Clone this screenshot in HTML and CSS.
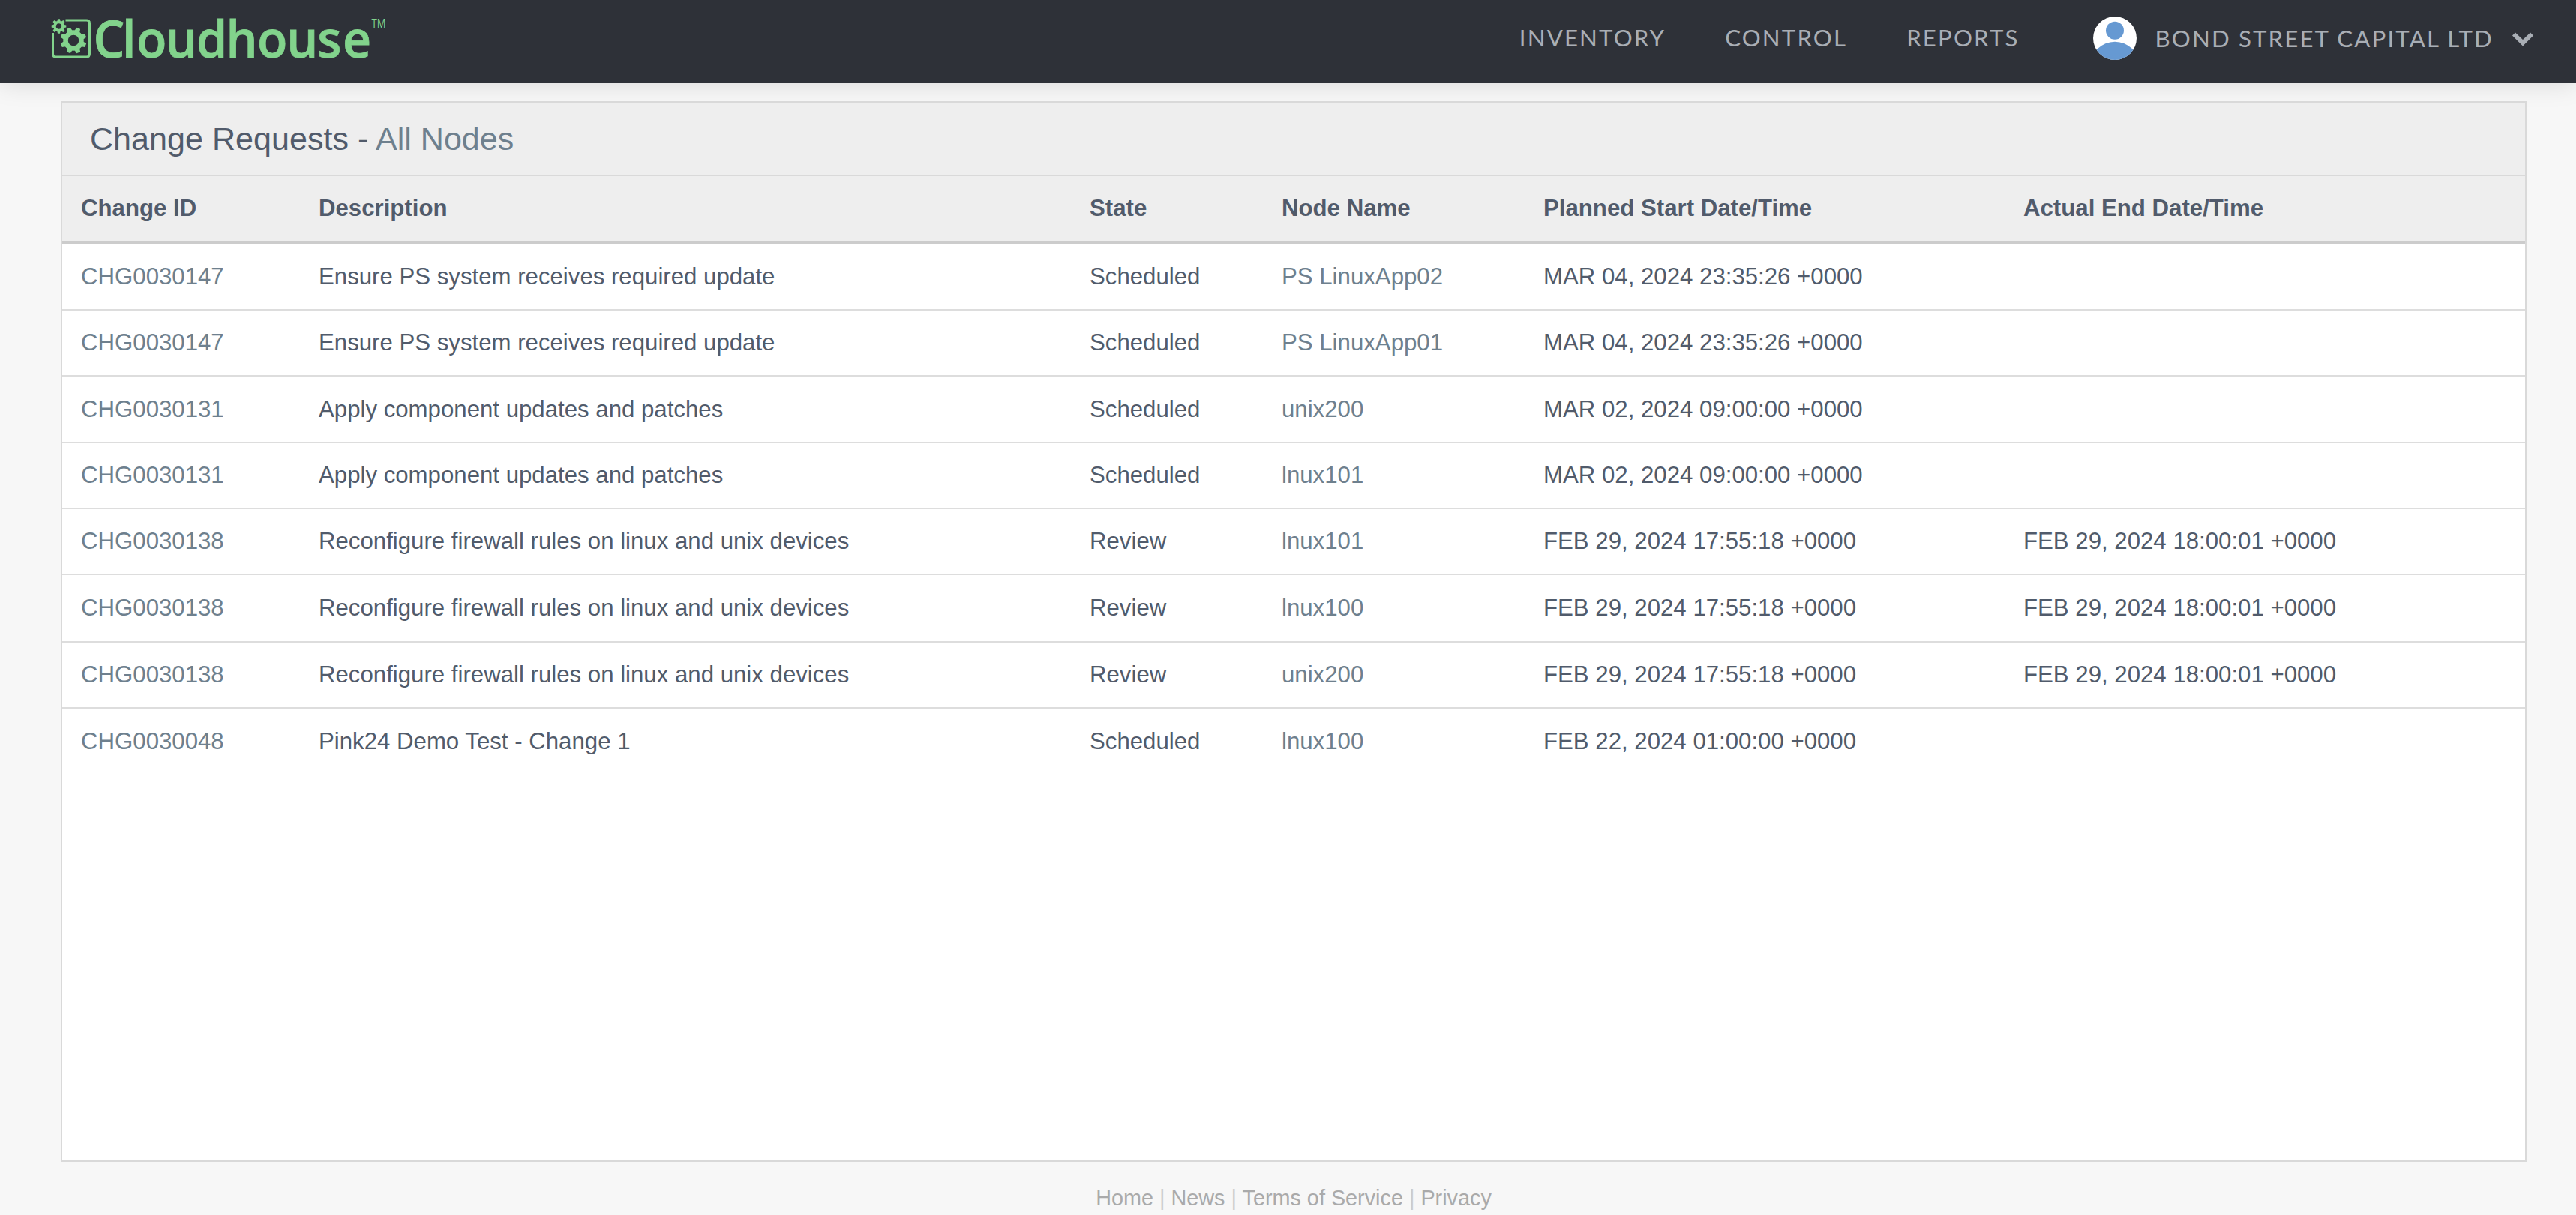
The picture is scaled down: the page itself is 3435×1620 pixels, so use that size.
FILE: index.html
```html
<!DOCTYPE html>
<html lang="en">
<head>
    <meta charset="UTF-8">
    <meta name="viewport" content="width=device-width, initial-scale=1.0">
    <title>Change Requests - Cloudhouse</title>
    <link rel="stylesheet" href="styles.css">
</head>
<body>

<header class="navbar">
    <a class="logo" href="#">
        <svg width="460" height="111" viewBox="68 0 460 111">
            <defs>
                <path id="tooth" d="M-4 -11 L-2.6 -17.5 L2.6 -17.5 L4 -11 Z"/>
                <g id="teeth">
                    <use href="#tooth" transform="rotate(22.5)"/>
                    <use href="#tooth" transform="rotate(67.5)"/>
                    <use href="#tooth" transform="rotate(112.5)"/>
                    <use href="#tooth" transform="rotate(157.5)"/>
                    <use href="#tooth" transform="rotate(202.5)"/>
                    <use href="#tooth" transform="rotate(247.5)"/>
                    <use href="#tooth" transform="rotate(292.5)"/>
                    <use href="#tooth" transform="rotate(337.5)"/>
                </g>
            </defs>
            <path class="frame" d="M87.5 27 H115.5 Q119.5 27 119.5 31 V72 Q119.5 76 115.5 76 H74.5 Q70.5 76 70.5 72 V44"/>
            <g class="gear" transform="translate(98 54)">
                <use href="#teeth"/>
                <circle class="ring" r="10.5"/>
            </g>
            <g class="gear" transform="translate(78.5 35) rotate(22.5) scale(.56)">
                <use href="#teeth"/>
                <circle class="ring" r="9.8"/>
            </g>
            <text class="wordmark" transform="scale(.96 1)" y="77" x="129.8 169.8 189.7 230.3 272.9 314.2 357.3 398.1 441 476">Cloudhouse</text>
            <text class="tm" x="495.5" y="36.5" textLength="19" lengthAdjust="spacingAndGlyphs">TM</text>
        </svg>
    </a>
    <nav class="menu">
        <a href="#">INVENTORY</a>
        <a href="#">CONTROL</a>
        <a href="#">REPORTS</a>
    </nav>
    <a class="account" href="#">
        <svg class="avatar" viewBox="0 0 58 58">
            <clipPath id="round"><circle cx="29" cy="29" r="29"/></clipPath>
            <g clip-path="url(#round)">
                <rect width="58" height="58" fill="#fff"/>
                <circle cx="29" cy="18.7" r="12" fill="#6699d2"/>
                <circle cx="29" cy="66.7" r="33" fill="#6699d2"/>
            </g>
        </svg>
        <span class="company">BOND STREET CAPITAL LTD</span>
        <svg class="chevron" viewBox="0 0 28 19">
            <path d="M0 4.5 L4 0.5 L14 10 L24 0.5 L28 4.5 L14 18.5 Z"/>
        </svg>
    </a>
</header>

<main class="panel">
    <h1>Change Requests - <a href="#">All Nodes</a></h1>
    <table>
        <colgroup>
            <col class="col-id">
            <col class="col-description">
            <col class="col-state">
            <col class="col-node">
            <col class="col-start">
            <col class="col-end">
        </colgroup>
        <thead>
        <tr>
            <th>Change ID</th>
            <th>Description</th>
            <th>State</th>
            <th>Node Name</th>
            <th>Planned Start Date/Time</th>
            <th>Actual End Date/Time</th>
        </tr>
        </thead>
        <tbody>
        <tr>
            <td><a href="#">CHG0030147</a></td>
            <td>Ensure PS system receives required update</td>
            <td>Scheduled</td>
            <td><a href="#">PS LinuxApp02</a></td>
            <td>MAR 04, 2024 23:35:26 +0000</td>
            <td></td>
        </tr>
        <tr>
            <td><a href="#">CHG0030147</a></td>
            <td>Ensure PS system receives required update</td>
            <td>Scheduled</td>
            <td><a href="#">PS LinuxApp01</a></td>
            <td>MAR 04, 2024 23:35:26 +0000</td>
            <td></td>
        </tr>
        <tr>
            <td><a href="#">CHG0030131</a></td>
            <td>Apply component updates and patches</td>
            <td>Scheduled</td>
            <td><a href="#">unix200</a></td>
            <td>MAR 02, 2024 09:00:00 +0000</td>
            <td></td>
        </tr>
        <tr>
            <td><a href="#">CHG0030131</a></td>
            <td>Apply component updates and patches</td>
            <td>Scheduled</td>
            <td><a href="#">lnux101</a></td>
            <td>MAR 02, 2024 09:00:00 +0000</td>
            <td></td>
        </tr>
        <tr>
            <td><a href="#">CHG0030138</a></td>
            <td>Reconfigure firewall rules on linux and unix devices</td>
            <td>Review</td>
            <td><a href="#">lnux101</a></td>
            <td>FEB 29, 2024 17:55:18 +0000</td>
            <td>FEB 29, 2024 18:00:01 +0000</td>
        </tr>
        <tr>
            <td><a href="#">CHG0030138</a></td>
            <td>Reconfigure firewall rules on linux and unix devices</td>
            <td>Review</td>
            <td><a href="#">lnux100</a></td>
            <td>FEB 29, 2024 17:55:18 +0000</td>
            <td>FEB 29, 2024 18:00:01 +0000</td>
        </tr>
        <tr>
            <td><a href="#">CHG0030138</a></td>
            <td>Reconfigure firewall rules on linux and unix devices</td>
            <td>Review</td>
            <td><a href="#">unix200</a></td>
            <td>FEB 29, 2024 17:55:18 +0000</td>
            <td>FEB 29, 2024 18:00:01 +0000</td>
        </tr>
        <tr>
            <td><a href="#">CHG0030048</a></td>
            <td>Pink24 Demo Test - Change 1</td>
            <td>Scheduled</td>
            <td><a href="#">lnux100</a></td>
            <td>FEB 22, 2024 01:00:00 +0000</td>
            <td></td>
        </tr>
        </tbody>
    </table>
</main>

<footer>
    <a href="#">Home</a> | <a href="#">News</a> | <a href="#">Terms of Service</a> | <a href="#">Privacy</a>
</footer>

</body>
</html>
```
FILE: styles.css
```css
/* Global Styles */
* {
    box-sizing: border-box;
}

body {
    margin: 0;
    height: 1620px;
    overflow: hidden;
    background: #f7f7f7;
    color: #515b6b;
    font-family: "Liberation Sans", Arial, sans-serif;
    font-size: 31.2px;
}

a {
    color: #6e808e;
    text-decoration: none;
}

/* Top Bar */
.navbar {
    display: flex;
    align-items: flex-start;
    height: 111px;
    padding: 0 57px 0 68px;
    background: #2e3138;
    box-shadow: 0 0 32px rgba(0, 0, 0, 0.13);
}

.logo svg {
    display: block;
}

.frame {
    fill: none;
    stroke: #82d38c;
    stroke-width: 3;
}

.gear {
    fill: #82d38c;
}

.ring {
    fill: none;
    stroke: #82d38c;
    stroke-width: 6.5;
}

.wordmark {
    fill: #82d38c;
    font-family: "Open Sans", sans-serif;
    font-size: 69px;
    font-weight: 600;
    stroke: #82d38c;
    stroke-width: 0.8;
}

.tm {
    fill: #82d38c;
    font-family: "Open Sans", sans-serif;
    font-size: 16px;
}

.menu {
    display: flex;
    gap: 79px;
    margin: 21px 0 0 auto;
}

.menu a, .company {
    color: #a9aeb5;
    font-family: Lato, sans-serif;
    font-size: 31.2px;
    line-height: 58px;
    letter-spacing: 2.15px;
    white-space: nowrap;
}

.account {
    display: flex;
    margin: 22px 0 0 98px;
}

.avatar {
    width: 58px;
    height: 58px;
}

.company {
    margin-left: 25px;
}

.chevron {
    width: 28px;
    height: 19px;
    margin: 21px 0 0 25px;
    fill: #a9aeb5;
}

/* Change Requests Panel */
.panel {
    width: 3288px;
    height: 1414px;
    margin: 24px 0 0 81px;
    border: 2px solid #d9d9d9;
    background: #fff;
}

h1 {
    height: 98px;
    margin: 0;
    padding-left: 37px;
    border-bottom: 2px solid #d9d9d9;
    background: #eee;
    font-size: 43.1px;
    font-weight: normal;
    line-height: 96px;
}

table {
    width: 100%;
    border-collapse: separate;
    border-spacing: 0;
    table-layout: fixed;
}

.col-id { width: 317px; }
.col-description { width: 1028px; }
.col-state { width: 256px; }
.col-node { width: 349px; }
.col-start { width: 640px; }

th, td {
    padding: 0 25px;
    text-align: left;
    white-space: nowrap;
}

th {
    height: 90px;
    border-bottom: 4px solid #ccc;
    background: #eee;
}

td {
    height: 88px;
    border-bottom: 2px solid #ddd;
}

tr:nth-child(1) td,
tr:nth-child(3) td {
    height: 89px;
}

tr:nth-child(6) td {
    height: 90px;
}

tr:last-child td {
    border-bottom: none;
}

/* Footer */
footer {
    margin: 32px 0 0 15px;
    text-align: center;
    color: #ccc;
    font-size: 28.8px;
}

footer a {
    color: #aaa;
}
```
